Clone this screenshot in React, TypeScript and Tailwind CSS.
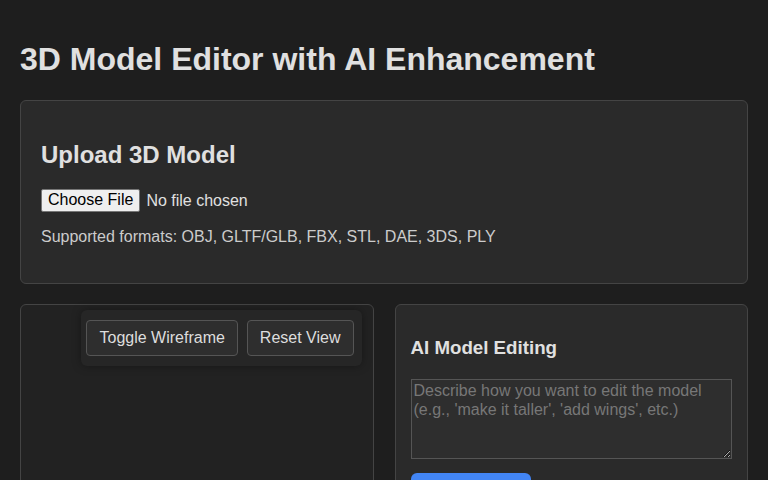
import React from "react";

export default function App() {
  return (
    <div className="min-h-screen bg-[#1e1e1e] p-5 text-[#e0e0e0] leading-[1.15] font-[family-name:'Liberation_Sans',Arial,sans-serif]">
      <h1 className="my-[21.44px] text-[32px] font-bold">
        3D Model Editor with AI Enhancement
      </h1>

      <div className="rounded-md border border-[#444] bg-[#2a2a2a] p-5">
        <h2 className="mt-[19.92px] mb-[20.5px] text-2xl leading-[1.15] font-bold">Upload 3D Model</h2>
        <input
          type="file"
          className="block text-base leading-[1.15] text-[#e0e0e0] file:mr-[6px] file:rounded-[2px] file:border file:border-[#767676] file:bg-[#efefef] file:px-[6px] file:py-[1.5px] file:text-black"
        />
        <p className="mt-4 mb-[17px] leading-[1.15] text-[#cccccc]">
          Supported formats: OBJ, GLTF/GLB, FBX, STL, DAE, 3DS, PLY
        </p>
      </div>

      <div className="mt-5 grid grid-cols-2 gap-[21px]">
        <div className="relative h-[400px] rounded-md border border-[#444] bg-[#222222]">
          <div className="absolute right-[11px] top-[5px] flex gap-[9px] rounded-md bg-[#262626] py-[10px] pl-[5px] pr-[8px] shadow-[0_0_10px_rgba(0,0,0,0.35)]">
            <button className="rounded border border-[#555] bg-[#2e2e2e] px-3 py-[7.5px] leading-[1.15] text-[#dddddd]">
              Toggle Wireframe
            </button>
            <button className="rounded border border-[#555] bg-[#2e2e2e] px-3 py-[7.5px] leading-[1.15] text-[#dddddd]">
              Reset View
            </button>
          </div>
        </div>

        <div className="rounded-md border border-[#444] bg-[#2a2a2a] p-[15px]">
          <h3 className="mt-[17px] mb-[20.4px] text-[18.72px] leading-[1.15] font-bold">AI Model Editing</h3>
          <textarea
            className="block h-20 w-full border border-[#555] bg-[#2e2e2e] p-[2px] leading-[1.15] text-[#e0e0e0] placeholder:text-[#777]"
            placeholder="Describe how you want to edit the model (e.g., 'make it taller', 'add wings', etc.)"
          />
          <button className="mt-[14px] rounded-md bg-[#4285f4] px-1.5 py-2 leading-[1.15] text-white">
            Apply Changes
          </button>
        </div>
      </div>
    </div>
  );
}
